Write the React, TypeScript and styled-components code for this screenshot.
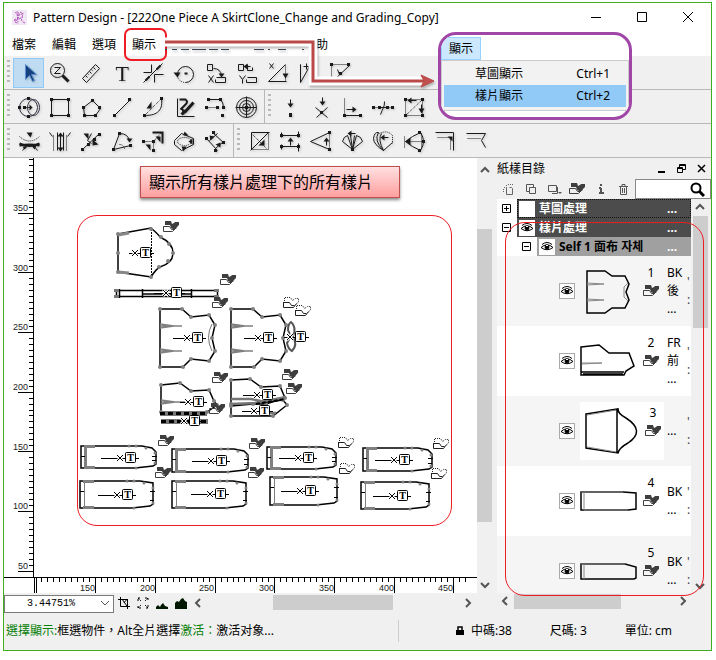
import React from 'react';
import styled, { createGlobalStyle, css } from 'styled-components';

const Global = createGlobalStyle`
  * { box-sizing: border-box; }
  body { margin: 0; background: #fff; color: #000; font: 12px/16px "Noto Sans", "Noto Sans CJK TC", "Noto Sans CJK KR", sans-serif; }
  button, input, select { font: inherit; color: inherit; }
  button { padding: 0; border: 0; background: none; }
  svg { display: block; }
`;

const Window = styled.div`position: relative; margin: 2px 4px 8px 3px; border: 1px solid #3fae1f; background: #f0f0f0;`;
const TitleBar = styled.header`display: flex; align-items: center; height: 29px; padding-left: 8px; background: #fff;`;
const Title = styled.h1`flex: 1; margin: 0 0 0 6px; font-size: 12px; font-weight: 400; line-height: 16px; white-space: nowrap;`;
const WindowButton = styled.button`width: 46px; height: 28px; display: grid; place-items: center;`;
const MenuBar = styled.nav`display: flex; height: 24px; background: #fff;`;
const MenuItem = styled.button<{ $gap?: boolean }>`
  position: relative; width: 40px; height: 24px; padding-top: 2px; white-space: nowrap;
  ${p => p.$gap && css`margin-left: 138px;`}
`;
const Highlight = styled.span`position: absolute; inset: -4px -3px -5px 0; border: 2px solid #ee1c23; border-radius: 7px;`;
const ToolRow = styled.div`display: flex; height: 34px; border-bottom: 1px solid #b8b8b8;`;
const ToolGroup = styled.div`display: flex; align-items: center; padding: 0 3px 0 1px; & + & { border-left: 1px solid #b8b8b8; }`;
const Grip = styled.span`width: 3px; height: 25px; margin: 0 3px 0 2px; background: repeating-linear-gradient(#b9b9b9 0 2px, transparent 2px 5px);`;
const ToolButton = styled.button<{ $on?: boolean }>`
  width: 31px; height: 30px; display: grid; place-items: center; border: 1px solid transparent;
  ${p => p.$on && css`background: #c0dcf3; border-color: #90c8f6;`}
`;
const IconSvg = styled.svg`fill: none; stroke: #1a1a1a; filter: drop-shadow(1px 1px 1px #0003); .f { fill: #1a1a1a; stroke: none; } .d { stroke-dasharray: 1 1; } text { fill: #1a1a1a; stroke: none; }`;

const Main = styled.main`display: flex;`;
const Workspace = styled.section`flex: 1; min-width: 0; display: grid; grid-template-columns: 30px minmax(0, 1fr) 20px; grid-template-rows: 419px 16px 19px;`;
const Ruler = styled.svg<{ $wide?: boolean }>`
  background: #fff; stroke: #000; overflow: hidden;
  ${p => p.$wide && css`grid-column: 1 / 3; width: 100%; height: 16px;`}
  text { fill: #222; stroke: none; font: 9px "Liberation Sans", sans-serif; text-anchor: end; }
`;
const Canvas = styled.div`position: relative; overflow: hidden; background: #fff;`;
const Drawing = styled.svg`fill: none; stroke: #000;`;
const Callout = styled.div`
  position: absolute; left: 106px; top: 8px; width: 260px; height: 32px; padding: 2px 8px;
  border: 1px solid #c0504d; background: linear-gradient(#ffe0e0, #ff9f9f); box-shadow: 0 2px 3px #0007;
  font: 16px/24px "Noto Sans CJK TC", sans-serif; white-space: nowrap;
`;
const RedFrame = styled.div`position: absolute; left: 43px; right: 25px; top: 57px; height: 311px; border: 1px solid #ee1c23; border-radius: 20px;`;
const ScrollV = styled.div`display: flex; flex-direction: column; align-items: center; width: 15px; grid-row: 1 / 3; grid-column: 3; padding: 4px 0 1px;`;
const Thumb = styled.div<{ $w: number; $h: number; $before: number }>`
  width: ${p => p.$w}px; height: ${p => p.$h}px; background: #cdcdcd;
  margin-${p => (p.$h > p.$w ? 'top' : 'left')}: ${p => p.$before}px;
`;
const ScrollButton = styled.button`width: 15px; height: 15px; display: grid; place-items: center;`;
const Spacer = styled.span`flex: 1;`;
const BottomBar = styled.div`grid-column: 1 / 4; display: flex; align-items: center; padding-right: 22px;`;
const ZoomBox = styled.label`position: relative; width: 110px; height: 18px; margin-right: 0; svg { position: absolute; right: 4px; top: 4px; pointer-events: none; stroke-width: 1; }`;
const ZoomSelect = styled.select`width: 110px; height: 18px; padding: 0 20px 0 22px; appearance: none; border: 1px solid #7a7a7a; border-radius: 0; background: #fff; font: 10px/16px "Liberation Mono", monospace;`;
const SmallButton = styled.button`width: 19px; height: 18px; display: grid; place-items: center;`;

const Panel = styled.aside`position: relative; width: 214px; flex: none;`;
const PanelHead = styled.div`display: flex; align-items: center; height: 21px;`;
const PanelTitle = styled.h2`flex: 1; margin: 0; font-size: 12px; line-height: 20px; font-weight: 400;`;
const PanelButton = styled.button`width: 20px; height: 20px; display: grid; place-items: center;`;
const PanelTools = styled.div`display: flex; align-items: center; height: 20px;`;
const PanelTool = styled.button`width: 23px; height: 20px; display: grid; place-items: center;`;
const Search = styled.label`position: relative; flex: 1; height: 20px; border: 1px solid #888; background: #fff; svg { position: absolute; right: 5px; top: 2px; }`;
const SearchInput = styled.input`width: 100%; height: 18px; padding: 0 22px 0 4px; border: 0; background: transparent; outline: 0;`;
const PanelBody = styled.div`display: flex; height: 394px;`;
const Tree = styled.div`flex: 1; min-width: 0; overflow: hidden; background: #fff;`;
const Group = styled.div<{ $child?: boolean }>`display: flex; align-items: center; height: 19px; padding-left: ${p => (p.$child ? 25 : 5)}px;`;
const Expander = styled.button`width: 9px; height: 9px; margin-right: 6px; flex: none;`;
const GroupBar = styled.div<{ $tone: 'focus' | 'dark' | 'light' }>`
  flex: 1; display: flex; align-items: center; height: 19px; padding-left: 2px; overflow: hidden; white-space: nowrap;
  font-weight: 700; color: ${p => (p.$tone === 'light' ? '#000' : '#fff')}; background: ${p => (p.$tone === 'light' ? '#a0a0a0' : '#4c4c4c')};
  outline: ${p => (p.$tone === 'focus' ? '1px dotted #111' : 'none')}; outline-offset: -1px;
`;
const Eye = styled.button<{ $framed?: boolean }>`width: 16px; height: 16px; flex: none; display: grid; place-items: center; background: #fff; ${p => p.$framed && css`border: 1px solid #aaa;`}`;
const GroupName = styled.span`flex: 1; margin-left: 4px;`;
const More = styled.span`width: 24px; color: #fff; line-height: 16px;`;
const List = styled.ul`margin: 0; padding: 0; list-style: none;`;
const Item = styled.li`display: flex; align-items: center; height: 70px; padding-left: 62px; &:nth-child(odd) { background: #f5f5f5; }`;
const Preview = styled.div<{ $white?: boolean }>`display: flex; align-items: center; width: 84px; height: 58px; margin-left: 5px; flex: none; ${p => p.$white && css`background: #fff; padding-left: 2px;`}`;
const Meta = styled.div`display: flex; flex-direction: column; align-items: center; gap: 5px; width: 18px; height: 50px; margin-left: 2px; line-height: 14px;`;
const Name = styled.div`width: 20px; margin-left: 3px; line-height: 18px; white-space: pre-line;`;
const Marks = styled.div`width: 4px; line-height: 18px; color: #444;`;
const PanelScroll = styled.div`display: flex; flex-direction: column; align-items: center; width: 16px; margin: 0 3px 0 1px;`;
const PanelScrollH = styled.div`display: flex; align-items: center; height: 16px; padding-right: 21px;`;
const PanelFrame = styled.div`position: absolute; left: 8px; right: 7px; top: 64px; bottom: 16px; border: 1px solid #ee1c23; border-radius: 20px; pointer-events: none;`;

const Status = styled.footer`display: flex; align-items: center; height: 38px; padding: 0 39px 1px 2px; white-space: nowrap;`;
const Hint = styled.p`flex: 1; margin: 0; border-right: 1px solid #ccc; line-height: 22px; b { font-weight: 400; color: #078007; }`;
const Fields = styled.div`display: flex; align-items: center; justify-content: space-between; width: 216px; margin-left: 57px; span { display: flex; align-items: center; gap: 7px; }`;

const Flow = styled.svg`position: absolute; left: 0; top: 0; fill: none; pointer-events: none; filter: drop-shadow(1px 2px 1px #0004);`;
const Popup = styled.div`position: absolute; left: 434px; top: 29px; width: 194px; height: 88px; border: 3px solid #a046a6; border-radius: 18px; background: #fff; overflow: hidden;`;
const PopupTab = styled.div`width: 40px; height: 23px; margin-top: 2px; border: 1px solid #99d1ff; background: #cce8ff; text-align: center; line-height: 22px;`;
const PopupMenu = styled.div`width: 188px; height: 51px; padding: 2px; border: 1px solid #ccc; background: #f2f2f2;`;
const PopupItem = styled.button<{ $on?: boolean }>`display: flex; justify-content: space-between; width: 100%; height: 22px; padding: 0 16px 0 31px; line-height: 22px; background: ${p => (p.$on ? '#91c9f7' : 'transparent')};`;

const Dots = ({ p }: { p: number[][] }) => <>{p.map(([x, y], i) => <rect key={i} className="f" x={x - 1.5} y={y - 1.5} width="3" height="3" />)}</>;

const tools: Record<string, React.ReactNode> = {
  select: <path d="M8 3v15l4-4 3 6 2-1-3-6h5z" fill="#16417f" stroke="#5a8fd0" />,
  zoom: <><circle cx="9" cy="9" r="7" /><path d="M6 6h6l-6 6h6" /><path d="M14 14l6 6" strokeWidth="3" /></>,
  ruler: <path d="M3 17L16 3l4 4L7 21zM6 14l2 2M8 12l1 1M10 10l2 2M12 8l1 1M14 6l2 2" />,
  text: <text x="5" y="19" fontFamily="Liberation Serif" fontWeight="400" fontSize="22" stroke="#1a1a1a">T</text>,
  trim: <><path d="M2 21L21 2M10 3v8H2M22 13h-9v8" /><path d="M4 19l4-4M15 8l4-4" strokeWidth="2" /></>,
  rotate: <><path d="M5 13A8 8 0 1 1 13 21" /><path className="d" d="M5 15a8 8 0 0 0 8 6" /><path className="f" d="M1 11h7l-3 5z" /><path d="M12 12h3" strokeWidth="2" /></>,
  moveX: <><path d="M4 3h5v6H4zM10 7q7 0 8 7M13 16h9v5H12v-3" /><path d="M5 14l5 7M10 14l-5 7" /><path className="f" d="M15 12h6l-3 4z" /></>,
  moveY: <><path d="M4 3h5v6H4zM13 3v6h5V6M10 5h6M13 16h9v5H12v-3" /><path d="M5 14l3 4 3-4M8 18v4" /><path className="f" d="M13 2v6l-4-3z" /></>,
  scale: <><path d="M3 20h18M3 20L20 3" /><path className="d" d="M20 4v16" /><path d="M4 2l4 5M8 2L4 7" /><path className="f" d="M17 12h6l-3 5z" /></>,
  mirror: <><path className="d" d="M4 3v18" /><path d="M4 3v18l9-16M7 5h6M10 2v6" /></>,
  corner: <><path className="d" d="M4 3h17M4 4v15" /><path d="M22 4L7 18M10 8l2 5" /><Dots p={[[4, 3], [21, 3], [13, 12], [7, 17]]} /></>,
  circle: <g stroke="#334"><circle cx="11" cy="12" r="9" /><ellipse cx="16" cy="12" rx="6" ry="8" /><path d="M6 12h7" /><path className="f" d="M12 9v6l3-3z" /><Dots p={[[2, 12], [7, 12], [11, 3], [11, 21]]} /></g>,
  rect: <><path d="M3 4h17v16H3z" /><Dots p={[[3, 4], [20, 4], [3, 20], [20, 20]]} /></>,
  poly: <><path d="M13 5l8 8-5 7H5L4 12z" /><Dots p={[[13, 5], [20, 12], [16, 20], [5, 20], [4, 12]]} /></>,
  line: <><path d="M4 20L19 5" /><Dots p={[[4, 20], [19, 4]]} /></>,
  arc: <><path className="d" d="M3 20L20 3" /><path d="M3 20c10 0 19-3 17-17" /><path className="f" d="M10 6v7H5z" /><Dots p={[[3, 20], [20, 3]]} /></>,
  pencil: <><path d="M5 3v18h17" /><path d="M7 4h6q3 2 0 5t-5 5q3-2 3 5" strokeWidth="2" /><path d="M12 17l9-10M9 19l4-4" strokeWidth="3" /></>,
  curve: <><path d="M5 4h12q3 3 3 8" /><path className="d" d="M3 12h12" /><Dots p={[[5, 4], [17, 4], [20, 12], [3, 12], [14, 12], [19, 20]]} /></>,
  rings: <><circle cx="12" cy="12" r="10" /><circle cx="12" cy="12" r="7" /><circle cx="12" cy="12" r="4" /><path d="M12 1v21M1 12h21" /><circle className="f" cx="12" cy="12" r="2" /></>,
  point: <><path d="M12 4v6" /><path className="f" d="M9 8h6l-3 4z" /><Dots p={[[12, 19], [12, 20]]} /></>,
  cross: <><path d="M13 2v6M6 12l12 10M18 12L7 22" /><path className="f" d="M10 6h6l-3 4z" /><Dots p={[[12, 17]]} /></>,
  offset: <><path className="d" d="M4 3v17" /><path d="M4 20h17M6 14h7" /><path className="f" d="M12 11v6l4-3z" /><Dots p={[[4, 20], [20, 20]]} /></>,
  divide: <><path className="d" d="M2 12h20" /><path d="M13 6q0 4-1 6t-3 7M8 12h7" /><Dots p={[[2, 12], [8, 12], [16, 12], [21, 12]]} /></>,
  diagonal: <><path className="d" d="M3 4v16h18M3 20L20 4M20 4v16M3 4h17" /><path d="M7 5h7M19 9v5" /><path className="f" d="M5 5l4-3v6zM16 13h6l-3 5z" /><Dots p={[[3, 4], [20, 4], [3, 20], [20, 20]]} /></>,
  warp: <><path d="M2 14q10 5 20 0M2 16q10-2 20 0" strokeWidth="2" /><path d="M5 21l4-5M16 16l4 5" /><path className="d" d="M2 7q10 9 20 0" /><path className="f" d="M9 3h6l-2 5zM5 17h5l-3 3zM14 16h5l-2 4z" /></>,
  pleat: <><path className="d" d="M5 6v16M18 6v16" /><path d="M1 3l3 4M22 3l-3 4M9 3v18M15 3v18M12 5v14" /><path className="f" d="M9 7h6l-3-4zM9 18h6l-3 4z" /></>,
  notch: <><path d="M3 20L20 4M12 4l-4 7 4 3" /><path className="f" d="M4 4h5v6zM13 10l6 5-6 1z" /><Dots p={[[3, 20], [9, 15], [15, 10], [20, 5]]} /></>,
  dart: <><path d="M3 20l17-4M9 4L3 20M9 4q9 0 10 8" /><path className="d" d="M9 15q4 0 5 4" /><path className="f" d="M16 9h6l-3 4z" /><Dots p={[[9, 4], [3, 20], [20, 16]]} /></>,
  turn: <><path d="M11 3h10v11" strokeWidth="2" /><path className="d" d="M2 12h10v10M12 12l8-9" /><path className="f" d="M14 7h5v6zM4 15h5v6z" /><Dots p={[[2, 12], [12, 12], [12, 21]]} /></>,
  seam: <><path d="M2 11l7-7 12 5v6L9 21 2 15z" /><ellipse className="d" cx="12" cy="12" rx="7" ry="4" /><path className="f" d="M12 2l4 4h-5zM11 22l3-5h-5zM20 9v6l-4-3z" /></>,
  swap: <><path d="M9 3l12 11M3 9l11 12M6 11l8-7M12 19l8-7" /><path className="f" d="M6 6l5 1-4 4zM12 15l5-2v5z" /><Dots p={[[3, 9], [20, 13], [12, 21], [10, 3]]} /></>,
  box: <><path d="M4 3h18M4 3v17M3 21L21 3" /><path className="d" d="M4 4l15 15M4 20h17V4" /><path className="f" d="M11 16h6v-6z" /></>,
  extend: <><path d="M3 6h17M3 17h17M3 3v5M20 2v6M3 15v5M20 14v8M12 10v6" /><path className="f" d="M9 12h6l-3-4z" /><Dots p={[[3, 6], [20, 6], [3, 17], [20, 17]]} /></>,
  flare: <><path d="M20 3L1 12l19 8" /><path className="d" d="M20 3v17" /><path d="M17 10v6" /><path className="f" d="M14 12h6l-3-4z" /><Dots p={[[20, 3], [20, 20]]} /></>,
  fan: <><path d="M12 20L2 12q1-5 5-6l5 14 4-14q5 1 6 6L12 20M10 6l2 14 2-14M9 4h6" /><path className="f" d="M7 4l4-3v6z" /><Dots p={[[12, 20]]} /></>,
  gather: <><path d="M12 21Q2 15 2 9q1-7 5-6-5 8 5 18M10 4q-4 6 2 17M12 8h5M12 21l9-8" /><path className="d" d="M8 4q8-4 13 2v8" /><path className="f" d="M9 8l4-3v6z" /></>,
  spread: <><path d="M3 12l7-5 8-4M3 12l7 5 8 4" /><path className="d" d="M3 12h18M2 7v11M19 4v16" /><path d="M18 3q6 9 0 18" /><path className="f" d="M3 12l5-4v8z" /><Dots p={[[17, 3], [21, 12], [17, 21]]} /></>,
  hem: <><path d="M2 3h18v18" /><path className="d" d="M4 8h13v13" /><path className="f" d="M14 7h5v5z" /></>,
  edge: <><path d="M2 4h19l-4 7 4 7" /><path className="d" d="M3 9h14" /></>,
};

const Tool = ({ id, on }: { id: string; on?: boolean }) => (
  <ToolButton $on={on} aria-label={id}><IconSvg width="24" height="24" viewBox="-0.5 -0.5 24 24">{tools[id]}</IconSvg></ToolButton>
);
const rows = [
  [['select', 'zoom', 'ruler', 'text', 'trim', 'rotate', 'moveX', 'moveY', 'scale', 'mirror', 'corner']],
  [['circle', 'rect', 'poly', 'line', 'arc', 'pencil', 'curve', 'rings'], ['point', 'cross', 'offset', 'divide', 'diagonal']],
  [['warp', 'pleat', 'notch', 'dart', 'turn', 'seam', 'swap'], ['box', 'extend', 'flare', 'fan', 'gather', 'spread', 'hem', 'edge']],
];

const Chevron = ({ d, thin }: { d: 'up' | 'down' | 'left' | 'right'; thin?: boolean }) => {
  const paths = { up: 'M1 7l4-4 4 4', down: 'M1 3l4 4 4-4', left: 'M7 1L3 5l4 4', right: 'M3 1l4 4-4 4' };
  return <svg width="10" height="10" fill="none" stroke="#555" strokeWidth={thin ? 1 : 2}><path d={paths[d]} /></svg>;
};

const FolderShape = ({ open }: { open?: boolean }) => open
  ? <g fill="none" stroke="#222"><path d="M.5 5v5.5h10l3-4M.5 5.500h6l2 3h3" /><path strokeDasharray="1 1" d="M1.500 4V.5h6l2 3 3-2h3v3l-2 3" /></g>
  : <g><path d="M2 0h6l1 3 2-1 1-1h2l2 0v3l-2 2-1 2h-3l-2-1-1-3H2z" fill="#3e3e3e" stroke="none" /><path d="M.5 5.500h6l2 3h3M.5 5.500v5h9l3-3" fill="none" stroke="#3e3e3e" /></g>;
const FolderIcon = () => <svg width="17" height="12"><FolderShape /></svg>;
const EyeIcon = () => <svg width="14" height="12" fill="none" stroke="#000"><path d="M1 6.500Q7 1 13 6.500 7 11 1 6.500zM2 3.500q5-4 10 0" /><circle cx="7" cy="6" r="2" fill="#000" /><rect x="6" y="4" width="2" height="1" fill="#fff" stroke="none" /></svg>;

const Label = ({ x, y, tail = 22 }: { x: number; y: number; tail?: number }) => (
  <g>
    <path d={`M${x - tail - 4} ${y + .5}H${x + 9}`} />
    <path d={`M${x - 13} ${y - 3}l6 6m0-6l-6 6`} stroke="#fff" strokeWidth="3" />
    <path d={`M${x - 13} ${y - 3}l6 6m0-6l-6 6`} />
    <rect x={x - 4.500} y={y - 5.500} width="10" height="10" rx="1" fill="#fff" />
    <text x={x + .5} y={y + 3} textAnchor="middle" fontFamily="Liberation Serif" fontWeight="700" fontSize="10" fill="#000" stroke="none">T</text>
  </g>
);
const Outline = ({ pts }: { pts: number[][] }) => (
  <g>
    <polygon points={pts.map(p => p.join(',')).join(' ')} strokeWidth="1.500" />
    {pts.map(([x, y], i) => <circle key={i} cx={x} cy={y} r="2" fill="#808080" stroke="none" />)}
  </g>
);
const Skirt = ({ x, y, w, h, round = true }: { x: number; y: number; w: number; h: number; round?: boolean }) => (
  <g>
    <path d={`M${x} ${y}h${w - 14}l${round ? '10 2 4 4' : '13 2 0 5'}V${y + h - 4}l-3 2-18 2H${x}z`} strokeWidth="1.500" />
    <path d={`M${x + 4.500} ${y}v${h}`} stroke="#808080" strokeWidth={round ? 3 : 1} />
    <path d={`M${x + 3} ${y + .5}h11M${x + 3} ${y + h - .5}h11`} stroke="#808080" strokeWidth="3" />
    <path d={`M${x} ${y + 10.500}h4M${x + w - 4} ${y + 10.500}h5M${x + w - 4} ${y + h - 7.500}h4`} />
    {[[w - 27, 0], [w - 20, 0], [w - 10, 2], [w - 1, 7], [w - 1, h - 5], [w - 20, h]].map(([a, b], i) => <circle key={i} cx={x + a} cy={y + b} r="1.500" fill="#808080" stroke="none" />)}
  </g>
);
const backPts = [[160, 309], [182, 309], [191, 317], [209, 315], [215, 325], [212, 338], [215, 351], [209, 361], [191, 359], [183, 367], [160, 367]];
const folders: [number, number, boolean?][] = [[171, 226], [228, 279], [220, 302], [291, 302, true], [303, 310, true], [220, 377], [290, 374], [294, 388], [217, 408], [166, 440], [257, 443], [163, 472], [256, 472], [346, 442, true], [347, 468, true], [441, 443, true], [439, 473, true]];
const skirts: [number, number, number, number, number, number, boolean?][] = [
  [81, 446, 75, 22, 130, 458], [172, 449, 76, 23, 221, 461], [267, 447, 69, 22, 308, 458], [363, 448, 69, 23, 404, 460],
  [80, 481, 74, 27, 127, 495, false], [172, 481, 75, 27, 220, 494, false], [270, 477, 68, 28, 310, 491, false], [361, 482, 69, 27, 402, 496, false],
];

const Pattern = () => (
  <Drawing width="443" height="419" viewBox="34 158 443 419">
    <path d="M118 234l33-6q7 6 9 9 13 6 13 16t-13 14q-4 2-9 10l-33-5z" strokeWidth="1.500" />
    <path d="M118 235l11-2M118 272l11 1" stroke="#888" strokeWidth="3" /><path d="M151.500 229v48" strokeDasharray="2 1" />
    {[[118, 234], [151, 229], [161, 237], [169, 244], [173, 253], [168, 261], [159, 267], [151, 277], [118, 272], [118, 253]].map(([x, y], i) => <circle key={i} cx={x} cy={y} r="2" fill="#808080" stroke="none" />)}
    <Label x={145} y={253} tail={12} />
    <path d="M115 290.500h103M115 296.500h103M116.500 289v9M142.500 289v9M191.500 289v9M217.500 289v9M119.500 289v9M142 294h49" strokeWidth="1.500" />
    <path d="M114 290.500h5M114 296.500h5M214 290.500h5M214 296.500h5" stroke="#777" strokeWidth="3" />
    <Label x={176} y={293} tail={18} />
    {[0, 71].map(dx => <g key={dx}>
      <Outline pts={backPts.map(([x, y]) => [x + dx, y])} />
      <path d={`M${160 + dx} 326h22M${160 + dx} 324l14 2-14 2M${160 + dx} 351h22M${160 + dx} 349l14 2-14 2`} stroke="#808080" strokeWidth="1.500" />
      <Label x={197 + dx} y={338} tail={20} />
    </g>)}
    <path d="M212 324q-7 13 0 27" stroke="#777" />
    <path d="M291 322q6 5 2 15 5 8-1 14-4-2-5-8 5-6 1-13 0-6 3-8z" strokeWidth="2" stroke="#555" /><Label x={300} y={337} tail={12} />
    <Outline pts={[[161, 385], [180, 383], [191, 391], [209, 390], [214, 401], [217, 405], [207, 412], [161, 412]]} />
    <path d="M161 402h24M161 400l14 2-14 2" stroke="#808080" strokeWidth="1.500" /><Label x={198} y={402} tail={14} />
    <path d="M160 413.500h47M161 421.500h47" stroke="#777" strokeWidth="5" /><path d="M160 413.500h47M161 421.500h47" strokeDasharray="5 3" strokeWidth="3" /><Label x={194} y={421} tail={12} />
    <Outline pts={[[231, 380], [250, 379], [261, 387], [280, 386], [285, 398], [266, 404], [231, 404]]} />
    <Outline pts={[[231, 406], [253, 404], [283, 400], [287, 405], [273, 416], [231, 416]]} />
    <path d="M231 399h20l14 3M231 404l25-1 30-6M267 413h9" stroke="#777" strokeWidth="2.500" /><path d="M256 404l29-5" strokeDasharray="4 2" strokeWidth="2" />
    <Label x={267} y={395} tail={20} /><Label x={264} y={411} tail={18} />
    {skirts.map(([x, y, w, h, tx, ty, round], i) => <g key={i}><Skirt x={x} y={y} w={w} h={h} round={round} /><Label x={tx} y={ty} tail={25} /></g>)}
    {folders.map(([x, y, open], i) => <g key={i} transform={`translate(${x - 8} ${y - 5})`}><FolderShape open={open} /></g>)}
  </Drawing>
);

const previews: { box: string; line: string; grey: string }[] = [
  { box: '-6 -3 60 48', line: 'M1 1h18l7 5h13l4 8-3 8 3 8-4 8H26l-7 5H1z', grey: 'M1 13l17 1-17 1M1 31l17-1-17-1M42 13l-4 4v10l4 4' },
  { box: '0 -8 60 48', line: 'M1 2l18-2 10 8h20l5 13-8 5-2 4H1zM1 27h43M3 29h40', grey: 'M2 18h20l-20 1' },
  { box: '-3 -2 60 48', line: 'M1 5l32-5q0 5 8 9 20 13 2 25-9 5-10 10L1 39zM32 1v42', grey: 'M2 6l29-5M2 38l29 5' },
  { box: '0 -14 60 48', line: 'M1 1h42l13 1v16l-8 1H1z', grey: 'M4 1v18M1 1h42M4 19h44' },
  { box: '0 -16 60 48', line: 'M1 1h44l11 3v11l-2 1H1z', grey: 'M4 1v15M1 1h44' },
];
const items = ['BK\n後\n…', 'FR\n前\n…', '…', 'BK\n…', 'BK\n…'];

const Plus = ({ open }: { open?: boolean }) => <svg width="9" height="9" fill="#fff" stroke="#000"><path d={open ? 'M.5.5h8v8h-8zM2 4.500h5' : 'M.5.5h8v8h-8zM2 4.500h5M4.500 2v5'} /></svg>;

export default function App() {
  const steps = Array.from({ length: 75 }, (_, i) => i);
  return (
    <>
      <Global />
      <Window>
        <TitleBar>
          <svg width="15" height="15" fill="none" stroke="#b35cc0"><rect width="15" height="15" fill="#f1e6f3" stroke="none" /><path d="M3 3q4-3 4 2t-4 4q-2 4 4 4M8 2q4 1 2 5t3 6M5 6l7-3M3 11l8-4M5 3l1 9" strokeDasharray="3 1" /></svg>
          <Title>Pattern Design - [222One Piece A SkirtClone_Change and Grading_Copy]</Title>
          <WindowButton aria-label="Minimize"><svg width="11" height="11" stroke="#000"><path d="M0 5.500h10" /></svg></WindowButton>
          <WindowButton aria-label="Maximize"><svg width="11" height="11" stroke="#000" fill="none"><path d="M.5.5h9v9h-9z" /></svg></WindowButton>
          <WindowButton aria-label="Close"><svg width="11" height="11" stroke="#000"><path d="M0 0l10 10M10 0L0 10" /></svg></WindowButton>
        </TitleBar>
        <MenuBar>
          <MenuItem>檔案</MenuItem><MenuItem>編輯</MenuItem><MenuItem>選項</MenuItem>
          <MenuItem>顯示<Highlight /></MenuItem>
          <MenuItem $gap>助</MenuItem>
        </MenuBar>
        {rows.map((groups, r) => (
          <ToolRow key={r}>
            {groups.map((g, i) => <ToolGroup key={i}><Grip />{g.map(id => <Tool key={id} id={id} on={id === 'select'} />)}</ToolGroup>)}
          </ToolRow>
        ))}
        <Main>
          <Workspace>
            <Ruler width="30" height="419">
              <path d="M29.500 0v419" />
              {steps.map(i => { const y = Math.round(412.700 - i * 5.970) + .5; return <path key={i} d={`M${i % 10 ? 25 : 14} ${y}H30`} />; })}
              {[50, 100, 150, 200, 250, 300, 350].map((v, i) => <text key={v} x="24" y={Math.round(411 - i * 59.700)}>{v}</text>)}
            </Ruler>
            <Canvas>
              <Pattern />
              <Callout>顯示所有樣片處理下的所有樣片</Callout>
              <RedFrame />
            </Canvas>
            <Ruler $wide>
              <path d="M0 .5h474M30.500 0v16" />
              {steps.slice(0, 73).map(i => { const x = Math.round(31.500 + i * 5.970) + .5; return <path key={i} d={`M${x} 0V${i % 10 ? 5 : 16}`} />; })}
              {[150, 200, 250, 300, 350, 400, 450].map((v, i) => <text key={v} x={Math.round(91 + i * 59.700)} y="14">{v}</text>)}
            </Ruler>
            <ScrollV>
              <ScrollButton aria-label="Scroll up"><Chevron d="up" /></ScrollButton>
              <Thumb $w={15} $h={293} $before={52} />
              <Spacer />
              <ScrollButton aria-label="Scroll down"><Chevron d="down" /></ScrollButton>
            </ScrollV>
            <BottomBar>
              <ZoomBox aria-label="Zoom"><ZoomSelect defaultValue="z"><option value="z">3.44751%</option></ZoomSelect><Chevron d="down" thin /></ZoomBox>
              <SmallButton aria-label="Crop"><svg width="12" height="12" fill="none" stroke="#000"><path d="M2.500 0v9.500H12M0 2.500h9l-3 3M9.500 2v10M4 2l5 7" /></svg></SmallButton>
              <SmallButton aria-label="Fit"><svg width="12" height="12" fill="none" stroke="#000"><path strokeDasharray="2 1" d="M1 4V1h3M8 1h3v3M11 8v3H8M4 11H1V8M1 1l3 3M11 1L8 4M11 11L8 8M1 11l3-3" /></svg></SmallButton>
              <SmallButton aria-label="Smaller"><svg width="12" height="12" fill="#001800"><path d="M0 12v-2l2-2 2 2 1-2 2-2 2 3 3 1v2z" /></svg></SmallButton>
              <SmallButton aria-label="Larger"><svg width="12" height="12" fill="#001800"><path d="M0 12V6l2-2 2 1 2-3 2-1 2 3 2 1v7z" /></svg></SmallButton>
              <ScrollButton aria-label="Scroll left"><Chevron d="left" /></ScrollButton>
              <Thumb $w={120} $h={15} $before={68} />
              <Spacer />
              <ScrollButton aria-label="Scroll right"><Chevron d="right" /></ScrollButton>
            </BottomBar>
          </Workspace>
          <Panel>
            <PanelHead>
              <PanelTitle>紙樣目錄</PanelTitle>
              <PanelButton aria-label="Hide"><svg width="9" height="9" stroke="#000" strokeWidth="2"><path d="M1 8h7" /></svg></PanelButton>
              <PanelButton aria-label="Float"><svg width="9" height="9" stroke="#000" fill="none"><path d="M2.500 3V.5h6v5H6M.5 3.500h5v5h-5zM2 1.500h7M0 4.500h6" /></svg></PanelButton>
              <PanelButton aria-label="Close panel"><svg width="9" height="9" stroke="#000" strokeWidth="1.500"><path d="M1 1l7 7M8 1L1 8" /></svg></PanelButton>
            </PanelHead>
            <PanelTools>
              <PanelTool aria-label="New"><svg width="11" height="11" fill="none" stroke="#666"><path strokeDasharray="1 1" d="M1 3.500h3M3.500 1v3M5 .5h5M.5 5v4" /><path d="M3.500 4v6.500h6v-6l-1-1h-2" /></svg></PanelTool>
              <PanelTool aria-label="Copy"><svg width="11" height="11" fill="none" stroke="#555"><path d="M3 7.500H.5v-7h7V3M3.500 3.500h6v6h-6z" /></svg></PanelTool>
              <PanelTool aria-label="Paste"><svg width="14" height="11" fill="none" stroke="#555"><path d="M.5 1.500h8v6h-8z" /><path d="M9.500 3v6.500H4" /><path d="M10 8h4l-2 2z" fill="#555" stroke="none" /></svg></PanelTool>
              <PanelTool aria-label="Edit piece"><FolderIcon /></PanelTool>
              <PanelTool aria-label="Information"><svg width="6" height="10" stroke="#555" strokeWidth="2"><path d="M3 0v2M3 4v5M1 4h2M1 9h5" /></svg></PanelTool>
              <PanelTool aria-label="Delete"><svg width="9" height="11" fill="none" stroke="#555"><path d="M0 2.500h9M3 2V.5h3V2M1.500 3v7.500h6V3M3.500 4v5M5.500 4v5" /></svg></PanelTool>
              <Search><SearchInput aria-label="Search" /><svg width="15" height="15" fill="none" stroke="#000" strokeWidth="2"><circle cx="6" cy="6" r="4.500" /><path d="M9 9l5 5" strokeWidth="3" /></svg></Search>
            </PanelTools>
            <PanelBody>
              <Tree>
                <Group><Expander aria-label="Expand"><Plus /></Expander><GroupBar $tone="focus"><Eye aria-label="Show group" /><GroupName>草圖處理</GroupName><More>…</More></GroupBar></Group>
                <Group><Expander aria-label="Collapse"><Plus open /></Expander><GroupBar $tone="dark"><Eye aria-label="Hide group"><EyeIcon /></Eye><GroupName>樣片處理</GroupName><More>…</More></GroupBar></Group>
                <Group $child><Expander aria-label="Collapse"><Plus open /></Expander><GroupBar $tone="light"><Eye aria-label="Hide group"><EyeIcon /></Eye><GroupName>Self 1 面布 자체</GroupName><More>…</More></GroupBar></Group>
                <List>
                  {items.map((name, i) => (
                    <Item key={i}>
                      <Eye $framed aria-label="Toggle piece"><EyeIcon /></Eye>
                      <Preview $white={i === 2}>
                        <svg width="60" height="48" viewBox={previews[i].box} fill="none" stroke="#000">
                          <path d={previews[i].line} strokeWidth="1.500" /><path d={previews[i].grey} stroke="#888" />
                        </svg>
                        <Meta>{i + 1}<FolderIcon /></Meta>
                      </Preview>
                      <Name>{name}</Name>
                      <Marks>'<br />:</Marks>
                    </Item>
                  ))}
                </List>
              </Tree>
              <PanelScroll>
                <ScrollButton aria-label="Scroll up"><Chevron d="up" /></ScrollButton>
                <Thumb $w={15} $h={112} $before={2} />
                <Spacer />
                <ScrollButton aria-label="Scroll down"><Chevron d="down" /></ScrollButton>
              </PanelScroll>
            </PanelBody>
            <PanelScrollH>
              <ScrollButton aria-label="Scroll left"><Chevron d="left" /></ScrollButton>
              <Thumb $w={107} $h={15} $before={2} />
              <Spacer />
              <ScrollButton aria-label="Scroll right"><Chevron d="right" /></ScrollButton>
            </PanelScrollH>
            <PanelFrame />
          </Panel>
        </Main>
        <Status>
          <Hint><b>選擇顯示:</b>框選物件，Alt全片選擇<b>激活：</b>激活对象...</Hint>
          <Fields>
            <span><svg width="8" height="9"><path d="M0 4h8v5H0z" /><path d="M2 4V1h4v3" fill="none" stroke="#000" strokeWidth="1.500" /></svg>中碼:38</span>
            <span>尺碼: 3</span>
            <span>單位: cm</span>
          </Fields>
        </Status>
        <Flow width="436" height="95">
          <path d="M161 39h148v39h112" stroke="#fff" strokeWidth="9" />
          <path d="M161 46.500h2M168 46.500h5M177 46.500h8M188 46.500h14M205 46.500h9M217 46.500h8M250 46.500h10M264 46.500h2M274 46.500h8M298 46.500h2" stroke="#345" />
          <path d="M161 39h148v39h112" stroke="#b94a48" strokeWidth="3" />
          <path d="M417 72l13 6-13 6 3-6z" fill="#c0504d" stroke="#b94a48" />
        </Flow>
        <Popup>
          <PopupTab>顯示</PopupTab>
          <PopupMenu>
            <PopupItem><span>草圖顯示</span><span>Ctrl+1</span></PopupItem>
            <PopupItem $on><span>樣片顯示</span><span>Ctrl+2</span></PopupItem>
          </PopupMenu>
        </Popup>
      </Window>
    </>
  );
}
